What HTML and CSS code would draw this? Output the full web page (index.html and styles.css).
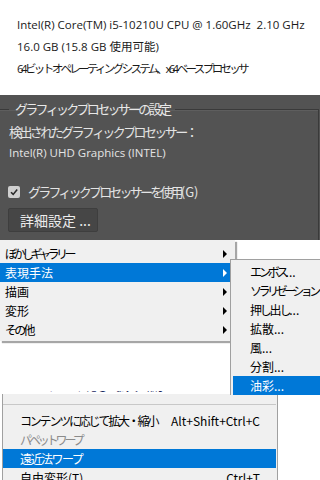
FILE: index.html
```html
<!DOCTYPE html>
<html lang="ja">
<head>
<meta charset="utf-8">
<link rel="stylesheet" href="styles.css">
</head>
<body>
<div class="sys">
  <div class="sys-line"><span>Intel(R) Core(TM) i5-10210U CPU @ 1.60GHz</span><span class="ghz">2.10 GHz</span></div>
  <div class="sys-line">16.0 GB (15.8 GB 使用可能)</div>
  <div class="sys-line jp">64 ビット オペレーティング システム、x64 ベース プロセッサ</div>
</div>
<div class="panel">
  <fieldset class="group">
    <legend class="group-title">グラフィックプロセッサーの設定</legend>
    <div class="detected">検出されたグラフィックプロセッサー：</div>
    <div class="gpu">Intel(R) UHD Graphics (INTEL)</div>
    <div class="check-row">
      <span class="checkbox"><svg width="10" height="10" viewBox="0 0 10 10"><path d="M2 5.2 L4.2 7.4 L8.2 2.6" fill="none" stroke="#2a2a2a" stroke-width="1.6"/></svg></span>
      <span class="check-label"><span class="check-jp">グラフィックプロセッサーを使用</span>(G)</span>
    </div>
    <div class="btn">詳細設定 ...</div>
  </fieldset>
</div>
<div class="menus">
  <div class="menu1">
    <div class="mi"><span class="ls35">ぼかしギャラリー</span><i class="arrow"></i></div>
    <div class="mi active"><span>表現手法</span><i class="arrow"></i></div>
    <div class="mi"><span>描画</span><i class="arrow"></i></div>
    <div class="mi"><span>変形</span><i class="arrow"></i></div>
    <div class="mi"><span class="ls27">その他</span><i class="arrow"></i></div>
  </div>
  <div class="ghost"><span>コンテンツに応じて拡大・縮小</span></div>
  <div class="menu3">
    <div class="sep"></div>
    <div class="mi3"><span class="ls22">コンテンツに応じて拡大・縮小</span><span>Alt+Shift+Ctrl+C</span></div>
    <div class="mi3 disabled"><span class="ls31">パペットワープ</span></div>
    <div class="mi3 active"><span class="ls15">遠近法ワープ</span></div>
    <div class="mi3"><span>自由変形(T)</span><span>Ctrl+T</span></div>
  </div>
  <div class="submenu">
    <div class="si"><span class="ls31">エンボス</span>...</div>
    <div class="si ls35">ソラリゼーション</div>
    <div class="si"><span class="ls22">押し出し</span>...</div>
    <div class="si">拡散...</div>
    <div class="si">風...</div>
    <div class="si">分割...</div>
    <div class="si active">油彩...</div>
  </div>
</div>
</body>
</html>
```
FILE: styles.css
```css
* { box-sizing: border-box; }
html, body { margin: 0; padding: 0; }
body {
  width: 320px;
  height: 480px;
  overflow: hidden;
  background: #ffffff;
  font-family: "Noto Sans CJK JP", sans-serif;
}
.sys {
  height: 95px;
  padding: 14px 0 0 17px;
  color: #1a1a1a;
  font-size: 11.5px;
  font-family: "Open Sans", "Noto Sans CJK JP", sans-serif;
}
.sys-line {
  height: 22px;
  line-height: 22px;
  white-space: nowrap;
}
.sys-line.jp { letter-spacing: -2.7px; }
.ghz { margin-left: 6px; }
.panel {
  height: 145px;
  background: #535353;
  padding-top: 7px;
  overflow: hidden;
  color: #e4e4e4;
}
.group {
  margin: 0 1px 0 -4px;
  padding: 0 0 20px 12px;
  border: 1px solid #3a3a3a;
  box-shadow: inset 1px 1px 0 #5e5e5e;
  min-width: 0;
}
.group-title {
  padding: 0 6px;
  font-size: 13px;
  line-height: 14px;
  color: #e8e8e8;
  letter-spacing: -2.7px;
}
.detected {
  margin-top: 7px;
  font-size: 13px;
  line-height: 18px;
  letter-spacing: -2.6px;
}
.gpu {
  margin-top: 3px;
  font-size: 11.5px;
  line-height: 18px;
  font-family: "Open Sans", sans-serif;
}
.check-row {
  margin-top: 23px;
  display: flex;
  align-items: center;
  gap: 8px;
  height: 14px;
  margin-left: -1px;
}
.checkbox {
  width: 12px;
  height: 12px;
  background: #cfcfcf;
  border-radius: 2px;
  display: flex;
  align-items: center;
  justify-content: center;
}
.checkbox svg { display: block; }
.check-label {
  font-size: 13px;
  line-height: 14px;
  white-space: nowrap;
}
.check-jp { letter-spacing: -2.8px; }
.btn {
  margin-top: 9px;
  margin-left: -1px;
  width: 90px;
  height: 24px;
  border: 1px solid #3e3e3e;
  border-radius: 2px;
  background: #464646;
  font-size: 14px;
  line-height: 22px;
  padding-left: 11px;
  color: #ececec;
}
.menus {
  position: relative;
  height: 240px;
  font-size: 12px;
  color: #000;
}
.ls15 { letter-spacing: -1.5px; }
.ls22 { letter-spacing: -2.2px; }
.ls27 { letter-spacing: -2.7px; }
.ls31 { letter-spacing: -3.1px; }
.ls35 { letter-spacing: -3.5px; }
.menu1 {
  width: 235px;
  background: #f0f0f0;
  padding: 4px 0 2px;
  box-shadow: 2px 2px 1px rgba(0,0,0,0.35);
}
.mi {
  height: 19px;
  line-height: 19px;
  padding: 0 8px 0 5px;
  display: flex;
  justify-content: space-between;
  align-items: center;
}
.mi.active { background: #0078d7; color: #fff; }
.arrow {
  width: 0;
  height: 0;
  border-left: 4px solid #000;
  border-top: 4px solid transparent;
  border-bottom: 4px solid transparent;
}
.mi.active .arrow { border-left-color: #fff; }
.ghost {
  margin: 50px 0 0 28px;
  height: 3px;
  overflow: hidden;
}
.ghost span {
  display: block;
  margin-top: -13px;
  line-height: 16px;
  color: #1b2a60;
  white-space: nowrap;
  letter-spacing: -2.2px;
}
.menu3 {
  margin-left: 2px;
  width: 276px;
  background: #f0f0f0;
  border-left: 1px solid #a0a0a0;
  border-right: 1px solid #a0a0a0;
  padding-top: 10px;
}
.sep {
  height: 1px;
  background: #c8c8c8;
  margin: 0 1px 6px 0;
}
.mi3 {
  height: 19px;
  line-height: 19px;
  padding: 0 17px 0 17px;
  display: flex;
  justify-content: space-between;
  white-space: nowrap;
}
.mi3.disabled { color: #8b8b8b; }
.mi3.active { background: #0078d7; color: #fff; margin-right: 1px; }
.submenu {
  position: absolute;
  left: 230px;
  top: 19px;
  width: 110px;
  background: #f0f0f0;
  border-left: 1px solid #a0a0a0;
  border-top: 1px solid #a0a0a0;
  padding: 2px 0 0 2px;
}
.si {
  height: 19px;
  line-height: 19px;
  padding-left: 17px;
  white-space: nowrap;
}
.si.active { background: #0078d7; color: #fff; }
```
